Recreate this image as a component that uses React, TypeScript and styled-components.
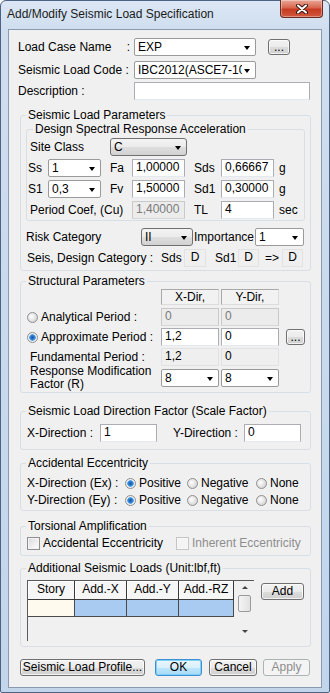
import React from "react";
import styled, { createGlobalStyle, css } from "styled-components";

const Global = createGlobalStyle`
  html, body { margin: 0; padding: 0; background: #ffffff; }
  body {
    font-family: "Liberation Sans", Arial, sans-serif;
    font-size: 12px;
    color: #000;
  }
  * { box-sizing: border-box; }
`;

const Window = styled.div`
  width: 330px;
  height: 693px;
  border: 1px solid #4e6282;
  border-radius: 6px 6px 2px 2px;
  background: linear-gradient(180deg, #dce7f5 0px, #cfdeef 28px, #c2d5eb 100%);
  padding: 0 7px 4px 7px;
  display: flex;
  flex-direction: column;
`;

const TitleBar = styled.div`
  height: 28px;
  display: flex;
  align-items: flex-start;
  flex-shrink: 0;
`;

const Title = styled.div`
  margin: 6px 0 0 -1px;
  line-height: 14px;
  color: #1b1b1b;
  white-space: nowrap;
`;

const CloseButton = styled.div`
  margin: -1px -1px 0 auto;
  width: 43px;
  height: 18px;
  border: 1px solid #6b2a1f;
  border-top: none;
  border-radius: 0 0 4px 4px;
  background: linear-gradient(180deg, #e9a898 0%, #d8664f 45%, #c63b22 55%, #d0593f 100%);
  box-shadow: inset 0 0 0 1px rgba(255, 255, 255, 0.35);
  display: flex;
  align-items: center;
  justify-content: center;
`;

const Client = styled.div`
  flex: 1;
  background: #f0f0f0;
  border: 1px solid #8a9bb1;
  padding: 8px 10px 0 9px;
  display: flex;
  flex-direction: column;
`;

const Row = styled.div<{ $mt?: number; $h?: number; $top?: boolean }>`
  display: flex;
  align-items: ${(p) => (p.$top ? "flex-start" : "center")};
  flex-shrink: 0;
  height: ${(p) => p.$h ?? 18}px;
  margin-top: ${(p) => p.$mt ?? 0}px;
`;

const Cell = styled.div<{ $w?: number; $pl?: number; $split?: boolean }>`
  ${(p) => (p.$w ? `width: ${p.$w}px;` : "")}
  padding-left: ${(p) => p.$pl ?? 0}px;
  flex-shrink: 0;
  white-space: nowrap;
  line-height: 14px;
  ${(p) =>
    p.$split &&
    css`
      display: flex;
      justify-content: space-between;
      padding-right: 4px;
    `}
`;

const TwoLine = styled.div`
  width: 135px;
  padding-left: 4px;
  line-height: 13px;
  flex-shrink: 0;
`;

const Field = styled.div<{ $w: number; $disabled?: boolean }>`
  width: ${(p) => p.$w}px;
  height: 18px;
  flex-shrink: 0;
  border: 1px solid ${(p) => (p.$disabled ? "#c9c9c9" : "#abadb3")};
  border-bottom-color: ${(p) => (p.$disabled ? "#d6d6d6" : "#e3e9ef")};
  background: ${(p) => (p.$disabled ? "#ececec" : "#ffffff")};
  color: ${(p) => (p.$disabled ? "#7a7a7a" : "#000")};
  padding-left: 3px;
  line-height: 15px;
`;

const ValueBox = styled.div<{ $w: number; $center?: boolean }>`
  width: ${(p) => p.$w}px;
  height: 18px;
  flex-shrink: 0;
  border: 1px solid #e2e2e2;
  background: #efefef;
  padding-left: 3px;
  line-height: 15px;
  ${(p) => p.$center && "text-align: center; padding-left: 0;"}
`;

const Combo = styled.div<{ $w: number; $button?: boolean }>`
  width: ${(p) => p.$w}px;
  height: 18px;
  flex-shrink: 0;
  display: flex;
  align-items: center;
  padding-left: 3px;
  border: 1px solid ${(p) => (p.$button ? "#707070" : "#9a9a9a")};
  border-radius: ${(p) => (p.$button ? 3 : 2)}px;
  background: ${(p) =>
    p.$button
      ? "linear-gradient(180deg, #f3f3f3 0%, #ebebeb 50%, #dedede 51%, #d2d2d2 100%)"
      : "#ffffff"};
  line-height: 15px;
  white-space: nowrap;
  overflow: hidden;
`;

const ComboText = styled.span`
  flex: 1;
  min-width: 0;
  overflow: hidden;
`;

const Arrow = styled.span`
  flex-shrink: 0;
  width: 0;
  height: 0;
  margin: 1px 5px 0 2px;
  border-left: 3.5px solid transparent;
  border-right: 3.5px solid transparent;
  border-top: 4px solid #000;
`;

const Button = styled.div<{ $w: number; $ml?: number; $mt?: number; $h?: number; $variant?: "default" | "disabled" }>`
  width: ${(p) => p.$w}px;
  height: ${(p) => p.$h ?? 17}px;
  margin-left: ${(p) => p.$ml ?? 0}px;
  margin-top: ${(p) => p.$mt ?? 0}px;
  flex-shrink: 0;
  border: 1px solid #707070;
  border-radius: 3px;
  background: linear-gradient(180deg, #f2f2f2 0%, #ebebeb 50%, #dddddd 51%, #cfcfcf 100%);
  box-shadow: inset 0 0 0 1px rgba(255, 255, 255, 0.7);
  display: flex;
  align-items: center;
  justify-content: center;
  line-height: 13px;
  white-space: nowrap;
  ${(p) =>
    p.$variant === "default" &&
    css`
      border-color: #3c8fd0;
      background: linear-gradient(180deg, #eaf6fd 0%, #d9f0fc 50%, #bee6fd 51%, #a7d9f5 100%);
      box-shadow: inset 0 0 0 1px #7fd1f7;
    `}
  ${(p) =>
    p.$variant === "disabled" &&
    css`
      border-color: #adb2b5;
      background: #f4f4f4;
      color: #8d8d8d;
      box-shadow: none;
    `}
`;

const Group = styled.fieldset<{ $mt: number; $pb: number }>`
  margin: ${(p) => p.$mt}px 0 0 2px;
  padding: 0 5px ${(p) => p.$pb}px 5px;
  border: 1px solid #d5dfe5;
  border-radius: 3px;
  min-width: 0;
  flex-shrink: 0;
`;

const InnerGroup = styled.fieldset`
  margin: 0;
  padding: 0 1px 1px 1px;
  border: 1px solid #d5dfe5;
  border-radius: 3px;
  min-width: 0;
`;

const Legend = styled.legend<{ $ml?: number }>`
  padding: 0 2px;
  margin-left: ${(p) => p.$ml ?? 0}px;
  line-height: 14px;
  white-space: nowrap;
`;

const DirHeader = styled.div`
  width: 58px;
  height: 16px;
  flex-shrink: 0;
  border: 1px solid #a9a9a9;
  border-right-color: #dcdcdc;
  border-bottom-color: #dcdcdc;
  background: #f2f2f2;
  text-align: center;
  line-height: 14px;
`;

const Pair = styled.div`
  display: flex;
  gap: 2px;
  flex-shrink: 0;
`;

const RadioDot = styled.span<{ $on?: boolean }>`
  width: 11px;
  height: 11px;
  flex-shrink: 0;
  border-radius: 50%;
  border: 1px solid #8e8f8f;
  background: ${(p) =>
    p.$on
      ? "radial-gradient(circle, #17559c 0, #2f7fd0 2px, #5aa6ea 3px, #e9edf1 3.6px, #f6f6f6 100%)"
      : "radial-gradient(circle at 40% 40%, #ffffff 0, #e6e6e6 45%, #c9c9c9 100%)"};
`;

const Option = styled.label<{ $w?: number; $ml?: number }>`
  display: flex;
  align-items: center;
  gap: 3px;
  flex-shrink: 0;
  ${(p) => (p.$w ? `width: ${p.$w}px;` : "")}
  padding-left: ${(p) => p.$ml ?? 0}px;
  white-space: nowrap;
  line-height: 14px;
`;

const CheckBox = styled.span<{ $disabled?: boolean }>`
  width: 13px;
  height: 13px;
  flex-shrink: 0;
  border: 1px solid ${(p) => (p.$disabled ? "#c5c5c5" : "#8e8f8f")};
  background: ${(p) =>
    p.$disabled ? "#f4f4f4" : "linear-gradient(135deg, #d9d9d9 0%, #f0f0f0 60%, #ffffff 100%)"};
  box-shadow: inset 0 0 0 1px ${(p) => (p.$disabled ? "#f8f8f8" : "#f4f4f4")};
`;

const CheckText = styled.span<{ $disabled?: boolean }>`
  color: ${(p) => (p.$disabled ? "#8d8d8d" : "#000")};
`;

const TableWrap = styled.div`
  display: flex;
  width: 227px;
  height: 61px;
  margin-left: 1px;
  flex-shrink: 0;
  border-left: 1px solid #5a5a5a;
  border-top: 1px solid #5a5a5a;
  background: #f0f0f0;
`;

const Grid = styled.div`
  width: 206px;
  display: grid;
  grid-template-columns: 47px 52px 52px 55px;
  grid-template-rows: 19px 17px;
  align-content: start;
`;

const HeadCell = styled.div`
  background: #f6f6f6;
  border-right: 1px solid #3a3a3a;
  border-bottom: 1px solid #3a3a3a;
  box-shadow: inset 1px 1px 0 #ffffff;
  text-align: center;
  line-height: 17px;
`;

const DataCell = styled.div<{ $story?: boolean }>`
  background: ${(p) => (p.$story ? "#fff9ee" : "#a9caf1")};
  border-right: 1px solid #4a4a4a;
  border-bottom: 1px solid #4a4a4a;
`;

const ScrollBar = styled.div`
  width: 17px;
  margin-left: 2px;
  display: flex;
  flex-direction: column;
  align-items: center;
  padding: 5px 0 8px;
`;

const ScrollArrow = styled.span<{ $up?: boolean }>`
  width: 0;
  height: 0;
  border-left: 3px solid transparent;
  border-right: 3px solid transparent;
  ${(p) => (p.$up ? "border-bottom: 3px solid #444;" : "border-top: 3px solid #444;")}
`;

const Thumb = styled.div`
  width: 13px;
  height: 17px;
  margin-top: 6px;
  border: 1px solid #9a9a9a;
  border-radius: 2px;
  background: linear-gradient(90deg, #f4f4f4, #e2e2e2);
`;

const ScrollFill = styled.div`
  flex: 1;
`;

const ButtonRow = styled.div`
  display: flex;
  align-items: center;
  margin-top: 12px;
  padding-left: 2px;
  flex-shrink: 0;
`;

function Select({ w, value, button }: { w: number; value: string; button?: boolean }) {
  return (
    <Combo $w={w} $button={button}>
      <ComboText>{value}</ComboText>
      <Arrow />
    </Combo>
  );
}

function EccentricityRow({ label, mt }: { label: string; mt: number }) {
  return (
    <Row $mt={mt} $h={16}>
      <Cell $w={99} $pl={1}>{label}</Cell>
      <Option $w={62}>
        <RadioDot $on />
        <span>Positive</span>
      </Option>
      <Option $w={69}>
        <RadioDot />
        <span>Negative</span>
      </Option>
      <Option>
        <RadioDot />
        <span>None</span>
      </Option>
    </Row>
  );
}

export default function App() {
  return (
    <>
      <Global />
      <Window>
        <TitleBar>
          <Title>Add/Modify Seismic Load Specification</Title>
          <CloseButton>
            <svg width="12" height="10" viewBox="0 0 12 10">
              <path d="M2 1.5 L10 8.5 M10 1.5 L2 8.5" stroke="#3a1610" strokeWidth="4" strokeLinecap="round" />
              <path d="M2 1.5 L10 8.5 M10 1.5 L2 8.5" stroke="#ffffff" strokeWidth="2" strokeLinecap="round" />
            </svg>
          </CloseButton>
        </TitleBar>

        <Client>
          <Row>
            <Cell $w={116} $split>
              <span>Load Case Name</span>
              <span>:</span>
            </Cell>
            <Select w={122} value="EXP" />
            <Button $w={22} $h={16} $ml={12}>...</Button>
          </Row>
          <Row $mt={5}>
            <Cell $w={116}>Seismic Load Code :</Cell>
            <Select w={122} value="IBC2012(ASCE7-10)" />
          </Row>
          <Row $mt={3}>
            <Cell $w={116}>Description :</Cell>
            <Field $w={176} />
          </Row>

          <Group $mt={8} $pb={3}>
            <Legend>Seismic Load Parameters</Legend>
            <InnerGroup>
              <Legend $ml={5}>Design Spectral Response Acceleration</Legend>
              <Row $mt={2}>
                <Cell $w={82} $pl={2}>Site Class</Cell>
                <Select w={77} value="C" button />
              </Row>
              <Row $mt={3}>
                <Cell $w={20}>Ss</Cell>
                <Select w={53} value="1" />
                <Cell $w={31} $pl={9}>Fa</Cell>
                <Field $w={53}>1,00000</Field>
                <Cell $w={36} $pl={9}>Sds</Cell>
                <Field $w={53}>0,66667</Field>
                <Cell $pl={5}>g</Cell>
              </Row>
              <Row $mt={3}>
                <Cell $w={20}>S1</Cell>
                <Select w={53} value="0,3" />
                <Cell $w={31} $pl={9}>Fv</Cell>
                <Field $w={53}>1,50000</Field>
                <Cell $w={36} $pl={9}>Sd1</Cell>
                <Field $w={53}>0,30000</Field>
                <Cell $pl={5}>g</Cell>
              </Row>
              <Row $mt={3}>
                <Cell $w={104} $pl={2}>Period Coef, (Cu)</Cell>
                <Field $w={53} $disabled>1,40000</Field>
                <Cell $w={36} $pl={9}>TL</Cell>
                <Field $w={53}>4</Field>
                <Cell $pl={5}>sec</Cell>
              </Row>
            </InnerGroup>
            <Row $mt={7}>
              <Cell $w={115}>Risk Category</Cell>
              <Select w={52} value="II" button />
              <Cell $w={62} $pl={1}>Importance</Cell>
              <Select w={49} value="1" />
            </Row>
            <Row $mt={3}>
              <Cell $w={135} $pl={1}>Seis, Design Category :</Cell>
              <Cell $w={23}>Sds</Cell>
              <ValueBox $w={22} $center>D</ValueBox>
              <Cell $w={32} $pl={9}>Sd1</Cell>
              <ValueBox $w={21} $center>D</ValueBox>
              <Cell $w={23} $pl={6}>=&gt;</Cell>
              <ValueBox $w={21} $center>D</ValueBox>
            </Row>
          </Group>

          <Group $mt={3} $pb={5}>
            <Legend>Structural Parameters</Legend>
            <Row $mt={1} $h={16}>
              <Cell $w={135} />
              <Pair>
                <DirHeader>X-Dir,</DirHeader>
                <DirHeader>Y-Dir,</DirHeader>
              </Pair>
            </Row>
            <Row $mt={3}>
              <Option $w={135} $ml={1}>
                <RadioDot />
                <span>Analytical Period :</span>
              </Option>
              <Pair>
                <Field $w={58} $disabled>0</Field>
                <Field $w={58} $disabled>0</Field>
              </Pair>
            </Row>
            <Row $mt={2}>
              <Option $w={135} $ml={1}>
                <RadioDot $on />
                <span>Approximate Period :</span>
              </Option>
              <Pair>
                <Field $w={58}>1,2</Field>
                <Field $w={58}>0</Field>
              </Pair>
              <Button $w={19} $h={16} $ml={7}>...</Button>
            </Row>
            <Row $mt={2}>
              <Cell $w={135} $pl={4}>Fundamental Period :</Cell>
              <Pair>
                <ValueBox $w={58}>1,2</ValueBox>
                <ValueBox $w={58}>0</ValueBox>
              </Pair>
            </Row>
            <Row $mt={3}>
              <TwoLine>
                Response Modification
                <br />
                Factor (R)
              </TwoLine>
              <Pair>
                <Select w={58} value="8" />
                <Select w={58} value="8" />
              </Pair>
            </Row>
          </Group>

          <Group $mt={11} $pb={8}>
            <Legend>Seismic Load Direction Factor (Scale Factor)</Legend>
            <Row $mt={6} $h={17}>
              <Cell $w={74} $pl={1}>X-Direction :</Cell>
              <Field $w={57}>1</Field>
              <Cell $w={87} $pl={16}>Y-Direction :</Cell>
              <Field $w={57}>0</Field>
            </Row>
          </Group>

          <Group $mt={6} $pb={2}>
            <Legend>Accidental Eccentricity</Legend>
            <EccentricityRow label="X-Direction (Ex) :" mt={5} />
            <EccentricityRow label="Y-Direction (Ey) :" mt={1} />
          </Group>

          <Group $mt={8} $pb={5}>
            <Legend>Torsional Amplification</Legend>
            <Row $mt={3} $h={14}>
              <Option $w={150} $ml={1}>
                <CheckBox />
                <CheckText>Accidental Eccentricity</CheckText>
              </Option>
              <Option>
                <CheckBox $disabled />
                <CheckText $disabled>Inherent Eccentricity</CheckText>
              </Option>
            </Row>
          </Group>

          <Group $mt={5} $pb={5}>
            <Legend>Additional Seismic Loads (Unit:lbf,ft)</Legend>
            <Row $mt={5} $h={61} $top>
              <TableWrap>
                <Grid>
                  <HeadCell>Story</HeadCell>
                  <HeadCell>Add.-X</HeadCell>
                  <HeadCell>Add.-Y</HeadCell>
                  <HeadCell>Add.-RZ</HeadCell>
                  <DataCell $story />
                  <DataCell />
                  <DataCell />
                  <DataCell />
                </Grid>
                <ScrollBar>
                  <ScrollArrow $up />
                  <Thumb />
                  <ScrollFill />
                  <ScrollArrow />
                </ScrollBar>
              </TableWrap>
              <Button $w={43} $ml={7} $mt={3}>Add</Button>
            </Row>
          </Group>

          <ButtonRow>
            <Button $w={125}>Seismic Load Profile...</Button>
            <Button $w={47} $ml={10} $variant="default">OK</Button>
            <Button $w={48} $ml={7}>Cancel</Button>
            <Button $w={47} $ml={6} $variant="disabled">Apply</Button>
          </ButtonRow>
        </Client>
      </Window>
    </>
  );
}
